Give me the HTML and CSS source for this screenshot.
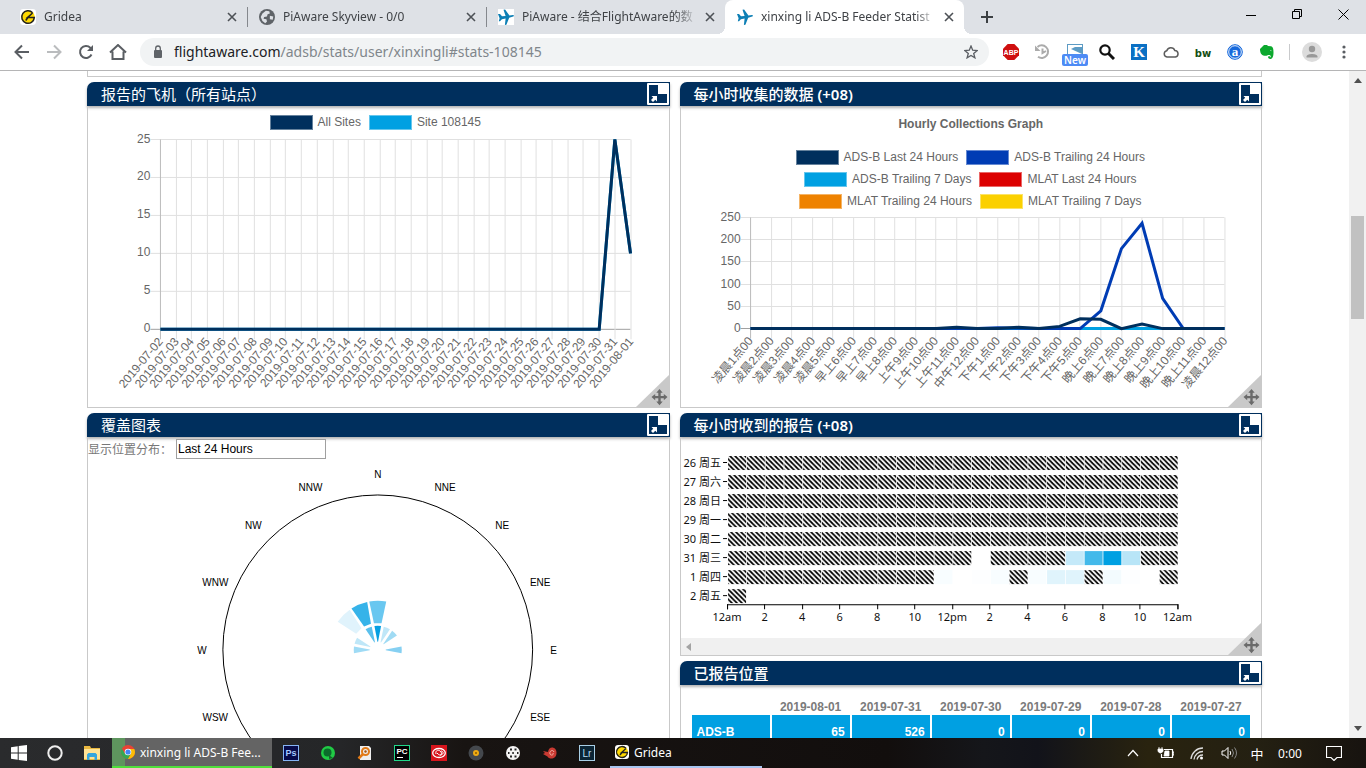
FILE: index.html
```html
<!DOCTYPE html>
<html lang="zh-CN">
<head>
<meta charset="utf-8">
<title>xinxing li ADS-B Feeder Statistics</title>
<link rel="stylesheet" href="styles.css">
</head>
<body>
<svg class="defs" aria-hidden="true">
  <symbol id="close" viewBox="0 0 10 10"><path d="M1 1l8 8M9 1l-8 8" stroke="#4d5156" stroke-width="1.6"/></symbol>
  <symbol id="plane" viewBox="0 0 16 16"><path d="M0 5l2 0 2 2.300 3.600-.3L5.500.8l1.600-.4 4.300 6L15 6c1.200 0 1.200 1.200.2 1.500l-4 1.200-2.800 7-1.500.2.700-6.500-3.700.8L2 12.200l-1.200.1.800-3z" fill="#0d7fb5"/></symbol>
  <symbol id="gridea" viewBox="0 0 14 14"><rect width="14" height="14" rx="3" fill="#fff"/><circle cx="7" cy="7" r="6" fill="#ffd900"/><path d="M11 3.200A5.500 5.500 0 1 0 12.500 7.500H6.500L11 3.500M7 7.500L5 10" fill="none" stroke="#222" stroke-width="1.300"/></symbol>
  <symbol id="expand" viewBox="0 0 22 22"><rect width="22" height="22" rx="1" fill="#fff"/><path d="M2 2h9v9h9v9H2z" fill="#002f5d"/><path d="M4.500 13H10V18.500L8.300 16.800 6 19 4 17l2.200-2.300z" fill="#fff"/></symbol>
  <symbol id="grip" viewBox="0 0 35 34"><path d="M35 0v34H0z" fill="#c9c9c9"/><path d="M24.500 15l3.200 3.800h-2v3.100h3.100v-2l3.700 3.200-3.700 3.200v-2h-3.100v3.100h2L24.500 31.200l-3.200-3.800h2v-3.100h-3.100v2l-3.700-3.200 3.700-3.200v2h3.100v-3.100h-2z" fill="#6a6a6a"/></symbol>
</svg>

<header class="browser">
  <div class="tabs">
    <div class="tab"><svg class="fav"><use href="#gridea"/></svg><span class="tab-title">Gridea</span><button class="tab-close" aria-label="Close"><svg><use href="#close"/></svg></button></div>
    <div class="tab"><svg class="fav" viewBox="0 0 14 14"><circle cx="7" cy="7" r="7" fill="#5f6368"/><path d="M6 1.500L9 2l.5 2-2 .5L7 6.500 4.500 7 4 8.500l2.500.5.5 2-1.500 1.500L3 10.500 1.500 7 3 4zM9.500 6L12.500 6.500 12 9.500 9.500 9z" fill="#dee1e6"/></svg><span class="tab-title">PiAware Skyview - 0/0</span><button class="tab-close" aria-label="Close"><svg><use href="#close"/></svg></button></div>
    <div class="tab"><svg class="fav fav-white"><use href="#plane"/></svg><span class="tab-title">PiAware - 结合FlightAware的数</span><button class="tab-close" aria-label="Close"><svg><use href="#close"/></svg></button></div>
    <div class="tab active"><svg class="fav"><use href="#plane"/></svg><span class="tab-title">xinxing li ADS-B Feeder Statist</span><button class="tab-close" aria-label="Close"><svg><use href="#close"/></svg></button></div>
    <button class="new-tab" aria-label="New tab"><svg width="12" height="12"><path d="M6 0v12M0 6h12" stroke="#3c4043" stroke-width="2"/></svg></button>
    <div class="window-controls">
      <button aria-label="Minimize"><svg width="10" height="10"><path d="M0 5.500h10" stroke="#000"/></svg></button>
      <button aria-label="Restore"><svg width="11" height="11"><path d="M.5 2.500h7v7h-7zM2.500 2.500v-2h7v7h-2" fill="none" stroke="#000"/></svg></button>
      <button aria-label="Close window"><svg width="11" height="11"><path d="M.5.5l10 10M10.500.5l-10 10" stroke="#000"/></svg></button>
    </div>
  </div>
  <div class="toolbar">
    <button aria-label="Back"><svg width="16" height="16"><path d="M15 8H2M8 1.500L1.500 8 8 14.500" fill="none" stroke="#5a5e63" stroke-width="2"/></svg></button>
    <button aria-label="Forward"><svg width="16" height="16"><path d="M1 8h13M8 1.500L14.500 8 8 14.500" fill="none" stroke="#babcbe" stroke-width="2"/></svg></button>
    <button aria-label="Reload"><svg width="16" height="16"><path d="M13.500 10.500A6 6 0 1 1 12.300 3.700L14 5.500" fill="none" stroke="#5a5e63" stroke-width="2"/><path d="M15 1v6H9z" fill="#5a5e63"/></svg></button>
    <button aria-label="Home"><svg width="18" height="16"><path d="M1 8.500L9 1l8 7.500M3.500 7.500V15h11V7.500" fill="none" stroke="#5a5e63" stroke-width="2"/></svg></button>
    <div class="omnibox">
      <svg width="10" height="14"><rect y="5" x="1" width="8" height="8" rx="1" fill="#5f6368"/><path d="M2.700 6V3.300a2.300 2.300 0 0 1 4.600 0V6" fill="none" stroke="#5f6368" stroke-width="1.300"/></svg>
      <a class="url" href="#stats-108145"><b>flightaware.com</b>/adsb/stats/user/xinxingli#stats-108145</a>
      <button class="star" aria-label="Bookmark"><svg width="14" height="14" viewBox="0 0 14 14"><path d="M7 1l1.700 4.200 4.500.3-3.500 2.900 1.200 4.400L7 10.400l-3.900 2.400 1.200-4.400L.8 5.500l4.500-.3z" fill="none" stroke="#5a5e63" stroke-width="1.300"/></svg></button>
    </div>
    <div class="extensions">
      <button aria-label="Adblock Plus"><svg width="16" height="16"><path d="M4.700 0h6.600L16 4.700v6.600L11.300 16H4.700L0 11.300V4.700z" fill="#cf0f0f"/><text x="8" y="11" class="ico-text abp">ABP</text></svg></button>
      <button aria-label="History"><svg width="16" height="16"><path d="M2.500 3A6.300 6.300 0 1 1 3 12.700M7.500 4.500V9L11 7" fill="none" stroke="#ababab" stroke-width="2"/><path d="M0 1.500V7h5.500z" fill="#ababab"/></svg></button>
      <button aria-label="New item" class="ext-new"><svg width="16" height="16"><rect x=".5" y=".5" width="15" height="13" fill="#fff" stroke="#5c9bc4"/><path d="M4 5l4-2h7v7z" fill="#5c9bc4"/></svg><span>New</span></button>
      <button aria-label="Search"><svg width="16" height="16"><circle cx="6" cy="6" r="4.700" fill="none" stroke="#111" stroke-width="2.200"/><path d="M9.500 9.500l5.500 5.500" stroke="#111" stroke-width="3"/></svg></button>
      <button aria-label="K"><svg width="16" height="16"><rect width="16" height="16" fill="#0b70c4"/><text x="8" y="13" class="ico-text k">K</text></svg></button>
      <button aria-label="Cloud"><svg width="16" height="16"><path d="M4 13a3.200 3.200 0 0 1-.2-6.300 4.200 4.200 0 0 1 8-.2A3.300 3.300 0 0 1 12.500 13z" fill="none" stroke="#5c5c5c" stroke-width="1.500"/></svg></button>
      <button aria-label="bw"><svg width="18" height="16"><text x="9" y="13" class="ico-text bw">bw</text></svg></button>
      <button aria-label="a"><svg width="16" height="16"><circle cx="8" cy="8" r="7.300" fill="#1769dc" stroke="#1769dc"/><circle cx="8" cy="8" r="6.300" fill="none" stroke="#e7f0fc"/><text x="8" y="12" class="ico-text a">a</text></svg></button>
      <button aria-label="Evernote"><svg width="16" height="16"><path d="M1 5l4-4h3l1 1 3 .3c2 .3 2.500 3 2.500 6 0 3-.5 6.700-3 6.700-2 0-2.500-1-2.500-2.500l2-.2v1.200c1.500-.5.5-2.500-.5-2.500-2-.2-2.500 1-5 .7C2 11.500 1 8 1 5z" fill="#0ca82e"/><path d="M11 6.500c1-.5 1.500 0 1.500.8z" fill="#fff"/></svg></button>
    </div>
    <span class="divider"></span>
    <button aria-label="Profile" class="profile"><svg width="20" height="20"><circle cx="10" cy="10" r="10" fill="#dcdcdc"/><circle cx="10" cy="7" r="3.200" fill="#999"/><path d="M4.500 14.500c0-3.500 11-3.500 11 0v1h-11z" fill="#999"/></svg></button>
    <button aria-label="Menu"><svg width="4" height="14"><circle cx="2" cy="2" r="1.600" fill="#5a5e63"/><circle cx="2" cy="7" r="1.600" fill="#5a5e63"/><circle cx="2" cy="12" r="1.600" fill="#5a5e63"/></svg></button>
  </div>
</header>

<div class="viewport">
  <main class="page">
    <div class="previous"></div>
    <div class="columns">
      <div class="column">
        <section class="panel">
          <header class="panel-head"><h2>报告的飞机（所有站点）</h2><button aria-label="展开"><svg><use href="#expand"/></svg></button></header>
          <div class="panel-body">
            <ul class="legend legend-sites">
              <li><i class="navy"></i>All Sites</li><li><i class="sky"></i>Site 108145</li>
            </ul>
            <svg id="aircraft" class="chart" viewBox="0 0 581 274" role="img" aria-label="报告的飞机"></svg>
            <svg class="grip"><use href="#grip"/></svg>
          </div>
        </section>
        <section class="panel">
          <header class="panel-head"><h2>覆盖图表</h2><button aria-label="展开"><svg><use href="#expand"/></svg></button></header>
          <div class="panel-body">
            <div class="range"><label for="range">显示位置分布：</label><select id="range"><option>Last 24 Hours</option></select></div>
            <svg id="coverage" class="chart" viewBox="0 0 581 400" role="img" aria-label="覆盖图表"></svg>
          </div>
        </section>
      </div>
      <div class="column">
        <section class="panel">
          <header class="panel-head"><h2>每小时收集的数据 <span>(+08)</span></h2><button aria-label="展开"><svg><use href="#expand"/></svg></button></header>
          <div class="panel-body">
            <h3 class="chart-title">Hourly Collections Graph</h3>
            <ul class="legend legend-hourly">
              <li><i class="navy"></i>ADS-B Last 24 Hours</li><li><i class="blue"></i>ADS-B Trailing 24 Hours</li>
              <li><i class="sky"></i>ADS-B Trailing 7 Days</li><li><i class="red"></i>MLAT Last 24 Hours</li>
              <li><i class="orange"></i>MLAT Trailing 24 Hours</li><li><i class="yellow"></i>MLAT Trailing 7 Days</li>
            </ul>
            <svg id="hourly" class="chart" viewBox="0 0 580 194" role="img" aria-label="每小时收集的数据"></svg>
            <svg class="grip"><use href="#grip"/></svg>
          </div>
        </section>
        <section class="panel">
          <header class="panel-head"><h2>每小时收到的报告 <span>(+08)</span></h2><button aria-label="展开"><svg><use href="#expand"/></svg></button></header>
          <div class="panel-body">
            <svg id="heat" class="chart" viewBox="0 0 580 201" role="img" aria-label="每小时收到的报告"></svg>
            <div class="hscroll"><svg width="5" height="8"><path d="M5 0v8L0 4z" fill="#a3a3a3"/></svg></div>
            <svg class="grip"><use href="#grip"/></svg>
          </div>
        </section>
        <section class="panel">
          <header class="panel-head"><h2>已报告位置</h2><button aria-label="展开"><svg><use href="#expand"/></svg></button></header>
          <div class="panel-body positions">
            <table>
              <thead><tr><td></td><th scope="col">2019-08-01</th><th scope="col">2019-07-31</th><th scope="col">2019-07-30</th><th scope="col">2019-07-29</th><th scope="col">2019-07-28</th><th scope="col">2019-07-27</th></tr></thead>
              <tbody><tr><th scope="row">ADS-B</th><td>65</td><td>526</td><td>0</td><td>0</td><td>0</td><td>0</td></tr></tbody>
            </table>
          </div>
        </section>
      </div>
    </div>
  </main>
  <div class="vscroll">
    <svg width="8" height="5"><path d="M0 5h8L4 0z" fill="#505050"/></svg>
    <div class="track"><div class="thumb"></div></div>
    <svg width="8" height="5"><path d="M0 0h8L4 5z" fill="#505050"/></svg>
  </div>
</div>

<footer class="taskbar">
  <button aria-label="Start"><svg width="16" height="16"><path d="M0 2.300l6.700-1v6.200H0zM7.700 1.100L16 0v7.500H7.700zM0 8.500h6.700v6.200L0 13.700zM7.700 8.500H16V16l-8.300-1.100z" fill="#fff"/></svg></button>
  <button aria-label="Cortana" class="cortana"><svg width="16" height="16"><circle cx="8" cy="8" r="6.700" fill="none" stroke="#eee" stroke-width="2"/></svg></button>
  <button aria-label="Explorer"><svg width="16" height="16"><path d="M0 1h6l1 2h9v12H0z" fill="#e9b840"/><path d="M0 4h16v10H0z" fill="#ffe394"/><path d="M3 15V9.500L4.500 8h7L13 9.500V15h-2.500v-3h-5v3z" fill="#35a6dd"/></svg></button>
  <button class="task task-chrome"><svg width="14" height="14"><circle cx="7" cy="7" r="7" fill="#e84335"/><path d="M.9 3.500A7 7 0 0 0 7 14l3-5.300H4z" fill="#34a853"/><path d="M7 14A7 7 0 0 0 13.300 4H7l3 4.700z" fill="#fbbc05"/><circle cx="7" cy="7" r="3.300" fill="#fff"/><circle cx="7" cy="7" r="2.600" fill="#4285f4"/></svg><span>xinxing li ADS-B Fee...</span></button>
  <button class="pin" aria-label="Photoshop"><svg width="16" height="16"><rect x=".5" y=".5" width="15" height="15" fill="#070b4a" stroke="#85b4f5"/><text x="8" y="11" class="ico-text ps">Ps</text></svg></button>
  <button class="pin" aria-label="Browser"><svg width="16" height="16"><circle cx="8" cy="8" r="7" fill="#20cb45"/><circle cx="7.500" cy="7.500" r="4" fill="#0b6b2b"/><path d="M9 10l4 3-4 1z" fill="#17632c"/></svg></button>
  <button class="pin" aria-label="Search tool"><svg width="16" height="16"><path d="M3 1h9l2 2v12H3z" fill="#eee"/><circle cx="8.500" cy="6.500" r="3.500" fill="none" stroke="#e27a16" stroke-width="2"/><circle cx="8.500" cy="6.500" r="1.200" fill="#a35312"/><path d="M6 9l-4.500 4.500" stroke="#e27a16" stroke-width="2.500"/></svg></button>
  <button class="pin" aria-label="PyCharm"><svg width="16" height="16"><rect x=".5" y=".5" width="15" height="15" fill="#000" stroke="#21d789"/><text x="8" y="9" class="ico-text pc">PC</text><path d="M3 12.500h6" stroke="#fff"/></svg></button>
  <button class="pin" aria-label="Creative Cloud"><svg width="16" height="16"><rect width="16" height="16" fill="#d7151d"/><ellipse cx="8" cy="8" rx="6.300" ry="4.500" fill="none" stroke="#fff" stroke-width="1.300"/><path d="M5 9c-1-4 3-5 5-2s-1 4-3 2l-1-1M9 10c4 0 4-4 1-4" fill="none" stroke="#fff"/></svg></button>
  <button class="pin" aria-label="Player"><svg width="16" height="16"><circle cx="8" cy="8" r="7.500" fill="#44484d"/><circle cx="8" cy="8" r="3" fill="#efaa12"/><circle cx="8" cy="8" r="1" fill="#8a5a00"/></svg></button>
  <button class="pin" aria-label="Dots"><svg width="16" height="16"><circle cx="8" cy="8" r="7" fill="#f4f4f4"/><path d="M5 3.500h2v2H5zM9.500 3.500h2v2h-2zM5 10.500h2v2H5zM9.500 10.500h2v2h-2zM3 7h1.500v2H3zM12 7h1.500v2H12zM7.300 7h1.500v2H7.300z" fill="#222"/></svg></button>
  <button class="pin" aria-label="Snail"><svg width="16" height="16"><path d="M1 6l5 1c1-7 9-5 8.500 1 0 6-7 7-9 3.500L1 9l2-1z" fill="#c93a32"/><path d="M12 7c-1-3-5-1-4 2 1 2 4 1 3-1" fill="none" stroke="#f4b1a5"/></svg></button>
  <button class="pin" aria-label="Lightroom"><svg width="16" height="16"><rect x=".5" y=".5" width="15" height="15" fill="#0b2535" stroke="#a9cfe6"/><text x="8" y="12" class="ico-text lr">Lr</text></svg></button>
  <button class="task task-gridea"><svg width="14" height="14"><use href="#gridea"/></svg><span>Gridea</span></button>
  <div class="tray">
    <button aria-label="Show hidden"><svg width="12" height="8"><path d="M1 7l5-5.500L11 7" fill="none" stroke="#fff" stroke-width="1.200"/></svg></button>
    <button aria-label="Battery"><svg width="17" height="14"><path d="M7 3.500h8.500v8H4.500V8M15.500 6H17v3h-1.500" fill="none" stroke="#fff" stroke-width="1.200"/><path d="M8 5h4v5H7zM1 3h5v2.500L4 7H3L1 5.500zM2 1v2M5 1v2" fill="#fff" stroke="#fff" stroke-width=".8"/></svg></button>
    <button aria-label="Network"><svg width="14" height="14"><path d="M1 13A12 12 0 0 1 13 2M4 13.500A9 9 0 0 1 13 5.500M7 13.500A6 6 0 0 1 13 9" fill="none" stroke="#ddd" stroke-width="1.300"/><circle cx="11.500" cy="12" r="1.500" fill="#fff"/></svg></button>
    <button aria-label="Volume"><svg width="17" height="14"><path d="M1 5h2.500L7 1.500v11L3.500 9H1z" fill="none" stroke="#fff"/><path d="M9 5q1.500 2 0 4" fill="none" stroke="#fff"/><path d="M11 3q3 4 0 8M13.500 1.500q4 5.500 0 11" fill="none" stroke="#888"/></svg></button>
    <button class="ime">中</button>
    <time>0:00</time>
    <button aria-label="Notifications" class="notify"><svg width="16" height="16"><path d="M.5 1.500h15v11H11l-3 3-3-3H.5z" fill="none" stroke="#fff" stroke-width="1.200"/></svg></button>
  </div>
</footer>
<script src="charts.js"></script>
</body>
</html>
```
FILE: styles.css
```css
* { box-sizing: border-box; }
body {
  margin: 0;
  height: 100vh;
  display: flex;
  flex-direction: column;
  overflow: hidden;
  background: #fff;
  font-family: "Liberation Sans", Arial, "Noto Sans CJK SC", sans-serif;
  font-size: 12px;
  color: #666;
}
button { border: 0; padding: 0; background: none; font: inherit; color: inherit; display: flex; align-items: center; justify-content: center; flex: none; }
svg { flex: none; display: block; }
h2, h3, ul { margin: 0; padding: 0; }
.defs { position: absolute; width: 0; height: 0; }

/* browser frame */
.browser, .taskbar { font-family: "Noto Sans", "Noto Sans CJK SC", sans-serif; flex: none; }
.browser { border-bottom: 1px solid #b5b5b6; }
.tabs { display: flex; height: 34px; background: #dee1e6; padding-left: 8px; }
.tab { position: relative; width: 239px; display: flex; align-items: center; gap: 8px; padding: 0 10px 0 12px; color: #3f4246; }
.tab + .tab:not(.active)::before { content: ""; position: absolute; left: 0; top: 7px; height: 20px; width: 1px; background: #85888d; }
.fav { width: 16px; height: 16px; }
.fav-white { background: #fff; }
.tab-title { flex: 1; min-width: 0; overflow: hidden; white-space: nowrap; line-height: 20px; -webkit-mask-image: linear-gradient(90deg, #000 88%, transparent); mask-image: linear-gradient(90deg, #000 88%, transparent); }
.tab-close { width: 10px; height: 10px; }
.tab-close svg { width: 10px; height: 10px; }
.active { background: #fff; border-radius: 8px 8px 0 0; }
.active::before, .active::after { content: ""; position: absolute; bottom: 0; width: 8px; height: 8px; }
.active::before { right: 100%; background: radial-gradient(circle at 0 0, transparent 8px, #fff 8px); }
.active::after { left: 100%; background: radial-gradient(circle at 100% 0, transparent 8px, #fff 8px); }
.new-tab { width: 46px; }
.window-controls { display: flex; margin-left: auto; height: 29px; }
.window-controls button { width: 46px; }
.toolbar { display: flex; align-items: center; height: 36px; padding: 0 6px; }
.toolbar > button { width: 32px; height: 28px; }
.omnibox { flex: 1; display: flex; align-items: center; height: 28px; margin: 0 6px 0 6px; padding: 0 11px 0 13px; border-radius: 14px; background: #f1f3f4; }
.url { flex: 1; margin-left: 11px; padding-bottom: 1px; font-size: 14px; color: #80868b; text-decoration: none; white-space: nowrap; }
.url b { font-weight: 400; color: #202124; }
.extensions { display: flex; }
.extensions button { width: 32px; height: 28px; }
.ext-new { position: relative; }
.ext-new span { position: absolute; top: 16px; left: 3px; width: 26px; height: 12px; border-radius: 2px; background: #4d8bf5; color: #fff; font-size: 10px; font-weight: 600; line-height: 12px; }
.divider { width: 1px; height: 16px; margin: 0 6px; background: #c9cacc; }
.ico-text { text-anchor: middle; fill: #fff; font-family: "Liberation Sans", sans-serif; font-weight: 700; }
.abp { font-size: 7px; }
.k { font-family: "Liberation Serif", serif; font-size: 15px; }
.bw { fill: #134d13; font-size: 10px; font-family: "DejaVu Sans", sans-serif; }
.a { font-family: "Liberation Serif", serif; font-size: 13px; }
.ps { fill: #a3c8ff; font-size: 9px; }
.pc { font-size: 8px; }
.lr { fill: #b7dcf2; font-size: 10px; font-weight: 400; }

/* page */
.viewport { flex: 1; min-height: 0; display: flex; overflow: hidden; }
.page { flex: 1; min-width: 0; padding: 0 87px; overflow: hidden; }
.previous { height: 6px; border: 1px solid #c9c9c9; border-top: 0; margin-bottom: 5px; }
.columns { display: grid; grid-template-columns: 1fr 1fr; gap: 10px; align-items: start; }
.column { display: grid; gap: 5px; min-width: 0; }
.panel-head { position: relative; display: flex; align-items: center; justify-content: space-between; height: 24px; padding: 0 1px 0 14px; border-radius: 7px 0 0 0; background: #002f5d; box-shadow: 0 2px 3px rgba(0, 0, 0, .3); }
.panel-head h2 { color: #fff; font: 400 15px/22px "Noto Sans", "Noto Sans CJK SC", sans-serif; }
.column + .column .panel-head h2 { font-weight: 500; }
.panel-head h2 span { font-weight: 600; }
.panel-head svg { width: 22px; height: 22px; }
.panel-body { position: relative; border: 1px solid #c9c9c9; border-top: 0; }
.chart { width: 100%; overflow: visible; }
.grip { position: absolute; right: -1px; bottom: -1px; width: 35px; height: 34px; }
.legend { display: flex; flex-wrap: wrap; justify-content: center; column-gap: 8px; list-style: none; }
.legend li { display: flex; align-items: center; gap: 5px; height: 22px; line-height: 14px; }
.legend i { width: 43px; height: 15px; border: 1px solid rgba(255, 255, 255, .4); }
.legend-sites { padding: 5px 6px 0 0; }
.legend-hourly { margin: 0 auto; width: 370px; padding: 0 1px 1px 0; }
.navy { background: #002f5d; }
.blue { background: #003cb4; }
.sky { background: #00a0e2; }
.red { background: #dc0000; }
.orange { background: #ee8200; }
.yellow { background: #fbd000; }
.chart-title { height: 40px; padding-top: 10px; font-size: 12px; line-height: 16px; font-weight: 700; text-align: center; }
.tick { font: 12px "Liberation Sans", Arial, "Noto Sans CJK SC", sans-serif; fill: #666; }
.compass { font: 10px "Liberation Sans", Arial, sans-serif; fill: #000; text-anchor: middle; }
.heat-label { font: 11px "Noto Sans", "Noto Sans CJK SC", sans-serif; fill: #111; }
.range { display: flex; align-items: center; height: 24px; gap: 4px; color: #777; }
.range select { appearance: none; width: 150px; height: 20px; padding: 0 1px; border: 1px solid #a0a0a0; border-radius: 0; background: #fff; color: #000; font: 12px "Liberation Sans", Arial, sans-serif; }
.hscroll { display: flex; align-items: center; height: 17px; padding-left: 5px; background: #f0f0f0; }
.positions { padding: 10px; }
table { width: 100%; border-spacing: 0; table-layout: fixed; font-weight: 700; }
thead td, thead th { height: 20px; padding: 4px 0 0; color: #7b7b7b; }
tbody td, tbody th { height: 34px; padding: 0 5px; border: 1px solid #fff; border-top: 0; background: #00a0e2; background-clip: padding-box; color: #fff; text-align: right; }
tbody th { text-align: left; }
.vscroll { flex: none; width: 17px; display: flex; flex-direction: column; align-items: center; padding: 7px 0; background: #f1f1f1; }
.track { flex: 1; align-self: stretch; padding: 133px 2px 0; }
.thumb { height: 103px; background: #c1c1c1; }

/* taskbar */
.taskbar { display: flex; height: 30px; background: linear-gradient(90deg, #2a2b2d 0, #252628 25%, #181412 34%, #120e0d 65%, #15161a 72%, #12131a 76%, #29230f 84%, #242012 92%, #17130f); color: #fff; }
.taskbar > button { width: 37px; }
.taskbar > .cortana { width: 35px; }
.taskbar > .cortana + button { width: 39px; }
.taskbar > .task { justify-content: flex-start; gap: 5px; padding: 0 8px; white-space: nowrap; }
.taskbar > .task-chrome { width: 160px; margin-left: 1px; padding: 0 9px; background: linear-gradient(90deg, #5e955e 13px, #646464 13px); border-bottom: 2px solid #4fdf3b; }
.taskbar > .task-gridea { width: 152px; margin-left: 5px; padding: 0 5px; border-bottom: 2px solid #a8c5f0; }
.tray { margin-left: auto; display: flex; align-items: center; }
.tray button { width: 32px; height: 30px; }
.tray .ime { width: 24px; font-family: "Noto Sans CJK SC", sans-serif; font-size: 13px; }
.tray time { width: 42px; text-align: center; }
.tray .notify { width: 45px; margin-right: 10px; }
```
FILE: charts.js
```js
const NS = 'http://www.w3.org/2000/svg';

function add(parent, tag, attrs, text) {
  const el = document.createElementNS(NS, tag);
  for (const key in attrs) el.setAttribute(key, attrs[key]);
  if (text !== undefined) el.textContent = text;
  parent.appendChild(el);
  return el;
}

function lineChart(id, o) {
  const svg = document.getElementById(id);
  const step = (o.right - o.left) / (o.labels.length - 1);
  const y = v => o.bottom - v / o.max * (o.bottom - o.top);
  for (let v = 0; v <= o.max; v += o.every) {
    const gy = Math.floor(y(v)) + 0.5;
    add(svg, 'path', { d: `M${o.left - 10} ${gy}H${o.right}`, stroke: v ? '#e0e0e0' : '#a0a0a0' });
    add(svg, 'text', { x: o.left - 10, y: gy + 3, class: 'tick', 'text-anchor': 'end' }, v);
  }
  o.labels.forEach((label, i) => {
    const x = Math.floor(o.left + i * step) + 0.5;
    add(svg, 'path', { d: `M${x} ${o.top}V${o.bottom + 10}`, stroke: i ? '#e0e0e0' : '#bbb' });
    add(svg, 'text', { transform: `translate(${x} ${o.bottom + 10}) rotate(-50)`, y: 4, class: 'tick', 'text-anchor': 'end' }, label);
  });
  o.series.forEach(s => {
    const points = s.data.map((v, i) => `${o.left + i * step},${y(v)}`).join(' ');
    add(svg, 'polyline', { points, fill: 'none', stroke: s.color, 'stroke-width': 3 });
  });
}

const days = [];
for (let d = 2; d <= 31; d++) days.push('2019-07-' + String(d).padStart(2, '0'));
days.push('2019-08-01');
const reported = Array(31).fill(0);
reported[29] = 25;
reported[30] = 10;
lineChart('aircraft', {
  left: 72.5, right: 543, top: 6.5, bottom: 196.5, max: 25, every: 5, labels: days,
  series: [{ color: '#00a0e2', data: reported }, { color: '#002f5d', data: reported }]
});

const hours = Array.from({ length: 24 }, (_, i) => {
  const h = i + 1;
  const part = h < 6 || h === 24 ? '凌晨' : h < 9 ? '早上' : h < 12 ? '上午' : h === 12 ? '中午' : h < 18 ? '下午' : '晚上';
  return part + (h > 12 ? h - 12 : h) + '点00';
});
lineChart('hourly', {
  left: 69.5, right: 543, top: 4.5, bottom: 115.5, max: 250, every: 50, labels: hours,
  series: [
    { color: '#00a0e2', data: Array(24).fill(0) },
    { color: '#003cb4', data: [0,0,0,0,0,0,0,0,0,0,0,0,2,1,0,0,0,40,180,237,68,0,0,0] },
    { color: '#002f5d', data: [0,0,0,0,0,0,0,0,0,0,3,0,0,3,0,5,22,21,0,10,0,0,0,0] }
  ]
});

const cov = document.getElementById('coverage');
const cx = 290, cy = 189;
const at = (r, deg) => {
  const a = deg * Math.PI / 180;
  return `${(cx + r * Math.sin(a)).toFixed(1)} ${(cy - r * Math.cos(a)).toFixed(1)}`;
};
add(cov, 'circle', { cx, cy, r: 155, fill: 'none', stroke: '#000' });
['N','NNE','NE','ENE','E','ESE','SE','SSE','S','SSW','SW','WSW','W','WNW','NW','NNW'].forEach((name, i) => {
  const [x, y] = at(176, i * 22.5).split(' ').map(Number);
  add(cov, 'text', { x, y: y + 4, class: 'compass' }, name);
});
[
  [8, 24, 0, '#079fe1'], [8, 24, 22.5, '#bfe7f8'], [8, 24, 45, '#a0dbf4'], [8, 24, 90, '#86d0f2'],
  [8, 24, -22.5, '#5bc0ec'], [8, 24, -67.5, '#bfe7f8'], [8, 24, -90, '#9fdbf5'],
  [27, 49, 0, '#69c7f0'], [27, 49, -22.5, '#36b3e9'], [27, 49, -45, '#e0f3fc']
].forEach(([r0, r1, deg, fill]) => {
  const a0 = r0 < 20 ? 2 : 8, a1 = r0 < 20 ? 8 : 10;
  add(cov, 'path', { fill, d: `M${at(r0, deg - a0)}L${at(r1, deg - a1)}A${r1} ${r1} 0 0 1 ${at(r1, deg + a1)}L${at(r0, deg + a0)}z` });
});

const heat = document.getElementById('heat');
const pattern = add(add(heat, 'defs', {}), 'pattern', { id: 'hatch', width: 5, height: 5, patternUnits: 'userSpaceOnUse' });
add(pattern, 'path', { d: 'M-1-1l7 7M4-1l2 2M-1 4l2 2', stroke: '#000', 'stroke-width': 1.7 });
const none = Array(24).fill('x');
const rows = [
  ['26 周五', none], ['27 周六', none], ['28 周日', none], ['29 周一', none], ['30 周二', none],
  ['31 周三', none.map((v, i) => ({ 13: '#fff', 18: '#c4e9f9', 19: '#43b9ea', 20: '#00a0e2', 21: '#b8e5f7' })[i] || v)],
  ['1 周四', none.map((v, i) => ({ 11: '#f8fdff', 12: '#fff', 13: '#fdfeff', 14: '#f8fdff', 16: '#f8fdff', 17: '#e0f4fc', 18: '#e0f4fc', 20: '#f3fbfe', 21: '#fdfeff', 22: '#fff' })[i] || v)],
  ['2 周五', ['x']]
];
rows.forEach(([label, cells], r) => {
  const y = 19 + r * 19;
  add(heat, 'text', { x: 40, y: y + 11, class: 'heat-label', 'text-anchor': 'end' }, label);
  add(heat, 'path', { d: `M42 ${y + 6.5}h4`, stroke: '#000' });
  cells.forEach((c, i) => add(heat, 'rect', {
    x: 47 + i * 18.75, y, width: 18, height: 14, fill: c === 'x' ? 'url(#hatch)' : c
  }));
});
add(heat, 'path', { d: 'M46.500 172V167.500H496.500V172', fill: 'none', stroke: '#000' });
['12am', 2, 4, 6, 8, 10, '12pm', 2, 4, 6, 8, 10, '12am'].forEach((t, i) => {
  const x = 46 + i * 37.5;
  add(heat, 'path', { d: `M${Math.floor(x) + 0.5} 167v5`, stroke: '#000' });
  add(heat, 'text', { x, y: 184, class: 'heat-label', 'text-anchor': 'middle' }, t);
});
```
